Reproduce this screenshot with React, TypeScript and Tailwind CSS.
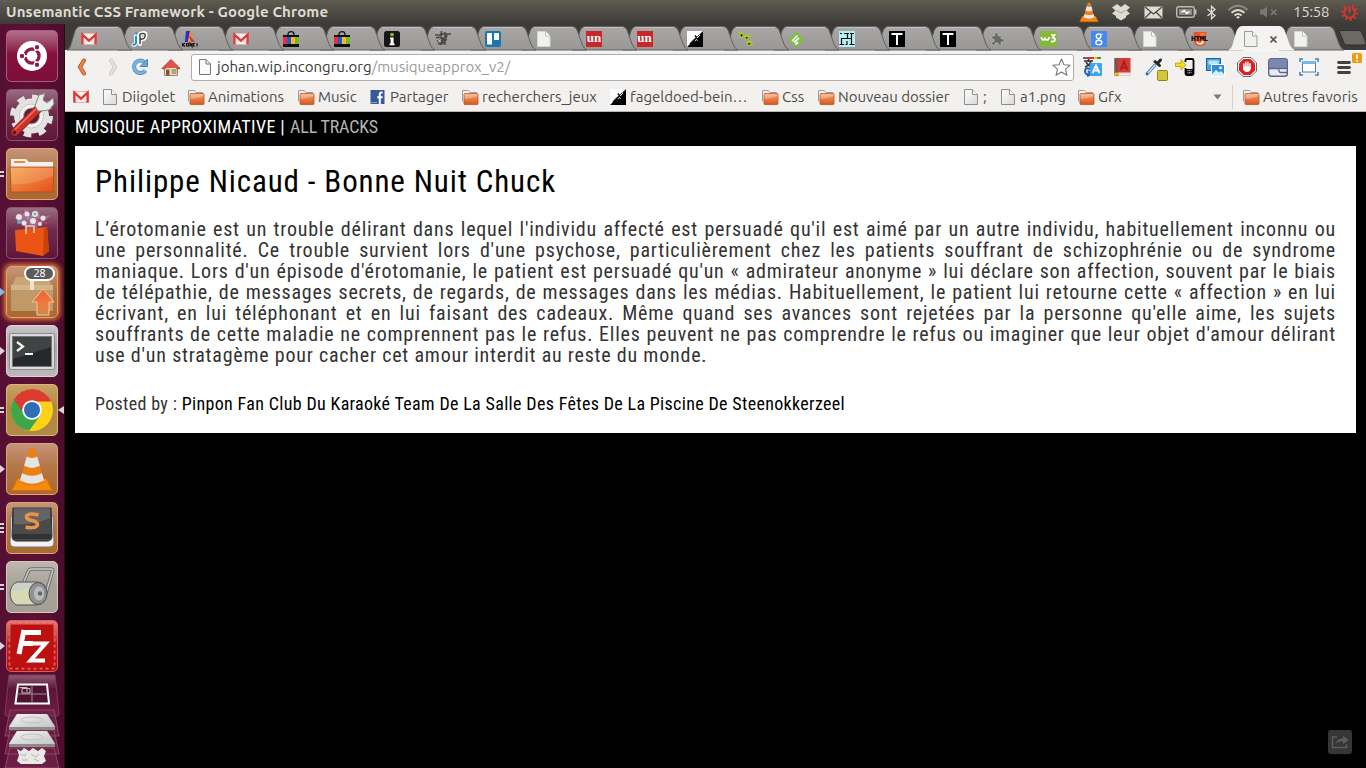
import React from "react";

const PAGE = "font-['Roboto_Condensed','Open_Sans',sans-serif]";

/* ---------- small icons (16px grid) ---------- */

const Svg = ({ w = 16, h = 16, box, children, className = "" }: { w?: number; h?: number; box?: string; children: React.ReactNode; className?: string }) => (
  <svg width={w} height={h} viewBox={box ?? `0 0 ${w} ${h}`} className={`block shrink-0 overflow-visible ${className}`}>{children}</svg>
);

const Gmail = () => (
  <Svg>
    <rect x="0.5" y="2.5" width="15" height="11" rx="1" fill="#fbf3f2" stroke="#e3b5b0" />
    <path d="M3 13 L6.3 8.6 M13 13 L9.7 8.6" stroke="#dcc" fill="none" />
    <path d="M1.4 13.5 V3.6 L8 9.6 L14.6 3.6 V13.5" fill="none" stroke="#dd3a38" strokeWidth="2.4" />
  </Svg>
);
const PageIcon = () => (
  <Svg>
    <path d="M1.5 0.5 H9.5 L14.5 5.5 V15.5 H1.5 Z" fill="url(#gPage)" stroke="#8e8e8e" />
    <path d="M9.5 0.5 V5.5 H14.5" fill="#fff" stroke="#8e8e8e" />
  </Svg>
);
const TabPage = ({ outlined }: { outlined?: boolean }) => (
  <Svg>
    <path d="M1.500 0.5 H9.500 L14 5 V15.5 H1.500 Z" fill="#f1f1ef" stroke={outlined ? "#9b9b99" : "#d4d4d2"} />
    <path d="M9.500 0.5 V5 H14" fill="#fff" stroke={outlined ? "#9b9b99" : "#bdbdbb"} />
  </Svg>
);
const Folder = () => (
  <Svg>
    <path d="M0.5 12.5 V1.5 H6.5 L8 3.5 H14.5 V5" fill="#f6f3f1" stroke="#a39c98" />
    <rect x="2" y="4.5" width="14" height="11" rx="0.8" fill="url(#gFolder)" stroke="#c0562a" strokeWidth="0.8" />
    <path d="M2.5 10 Q9 9.5 15.5 7 V5 H2.5 Z" fill="#fff" opacity="0.28" />
  </Svg>
);
const Jp = () => (
  <Svg>
    <g fill="none" strokeLinecap="round">
      <path d="M4 5 V11 Q4 14 1.5 13.8 M8 13 V3 Q14 0.5 13.5 5 Q13 9 8.5 8" stroke="#fff" strokeWidth="4" />
      <path d="M4 5.5 V11 Q4 14 1.3 13.6 M4.2 2.2 V2.4" stroke="#1a8fd0" strokeWidth="2" />
      <path d="M8 12.5 V3.2 Q13.6 1 13.2 5 Q12.6 8.6 8.5 7.8" stroke="#333" strokeWidth="1.4" />
    </g>
  </Svg>
);
const Kong = () => (
  <Svg>
    <path d="M4 0 H8 L6 11 H3 Z" fill="#2b2bd0" /><path d="M8 0 H12 L8 6 L6.6 7 Z" fill="#f58a1f" />
    <path d="M8 5 L13 11 H9 L7 7 Z" fill="#e33124" /><path d="M7 6 L9 11 H6 Z" fill="#ffb400" />
    <path d="M0.5 12 V15.5 M3 12 L1 13.8 L3 15.5 M4.5 12.5 H6.5 V15 H4.5 Z M8 15.5 V12 L10 15.5 V12 M13 12.5 H11.4 V15 H13 M15 12 V15.5" stroke="#111" strokeWidth="1.1" fill="none" />
  </Svg>
);
const Bag = () => (
  <Svg>
    <path d="M5 5 V3.5 Q5 0.7 8 0.7 Q11 0.7 11 3.5 V5" fill="none" stroke="#161616" strokeWidth="1.3" />
    <rect y="4" width="16" height="12" fill="#0b0b0b" />
    <rect y="6" width="4" height="7" fill="#ee2b36" /><rect x="4" y="6" width="4" height="7" fill="#1a5bd8" />
    <rect x="8" y="6" width="4" height="7" fill="#fcb811" /><rect x="12" y="6" width="4" height="7" fill="#73b72b" />
  </Svg>
);
const Info = () => (
  <Svg>
    <rect width="16" height="16" rx="2.5" fill="#161616" />
    <circle cx="8" cy="3.6" r="1.9" fill="#84c01c" />
    <path d="M6 6.5 H9.6 V12.5 H10.6 V14.3 H5.6 V12.5 H6.6 V8 H6 Z" fill="#fff" />
  </Svg>
);
const Scribble = () => (
  <Svg>
    <path d="M6.5 0 V5 M0 4 H6 M5 3 H16 M10 1 V14 M1 7 Q5 5 7 8 T11 8 M2 10 Q5 8 8 11 L4 13 M5 6 L12 9 M3 12 Q7 15 9 11 M12 4 L11 7" fill="none" stroke="#4b4947" strokeWidth="1.6" />
    <path d="M3 9 L6 10" stroke="#cfcdc9" />
  </Svg>
);
const Trello = () => (
  <Svg>
    <rect width="16" height="16" rx="2" fill="#1d76aa" />
    <rect x="2" y="2" width="5" height="11.5" rx="0.6" fill="#fff" /><rect x="9" y="2" width="5" height="7" rx="0.6" fill="#fff" />
  </Svg>
);
const Un = () => (
  <div className="flex size-4 items-center justify-center bg-[#c9262a] font-['Liberation_Serif',serif] text-[13px] leading-none font-bold text-white pb-[3px]">un</div>
);
const Split = () => (
  <Svg>
    <rect width="16" height="16" fill="#fff" /><path d="M16 0 V16 H0 Z" fill="#000" />
    <path d="M3 13 L8 8 M8 4.5 L9.5 6.5 L8.4 8 L10 9 L12 4" stroke="#111" strokeWidth="1.5" fill="none" />
    <path d="M7.8 10 L9.6 8.4 L10.5 9.8 M10 7 L13 4" stroke="#eee" strokeWidth="1" fill="none" />
  </Svg>
);
const Blobs = () => (
  <Svg>
    <path d="M1 1 Q4 0 6 3 Q5 8 2 7 Q0 4 1 1 Z M6 5 Q9 2 12 4 Q13 8 8 9 Q6 8 6 5 Z M8 11 Q12 8 15 11 Q15 15 11 15 Q8 14 8 11 Z" fill="#a9c92c" />
    <path d="M2.5 3 L5 4 L3 6 Z M7.5 6 L10.5 6.5 L8.5 8 Z M9.5 12 L13 12.5 L11 14 Z" fill="#111" />
  </Svg>
);
const Feedly = () => (
  <Svg>
    <rect x="2.6" y="2.9" width="11.2" height="11.2" rx="2" transform="rotate(45 8.2 8.5)" fill="#7cc13c" />
    <path d="M4.5 9.5 L9 5 M6.5 11 L10.5 7.5 M8 13 L9.7 11.6" stroke="#fff" strokeWidth="1.7" strokeLinecap="round" />
  </Svg>
);
const Maze = () => (
  <Svg>
    <rect width="16" height="16" fill="#b7eef3" />
    <path d="M1 2.500 H3 M5 2.5 H10 M8.500 2.500 V7.5 H2.5 V13 M0.5 13.5 H5 M6.500 13.500 H8 V10 M12.500 2.500 V13.500 M10.500 13.5 H15.500 M11 2.500 H15 M8 7.500 H12.500" fill="none" stroke="#111" strokeWidth="1.200" />
  </Svg>
);
const Tee = () => (
  <Svg><rect width="16" height="16" fill="#000" /><path d="M2.5 3 H13.5 M8 3 V14" stroke="#fff" strokeWidth="2" /></Svg>
);
const Puzzle = () => (
  <Svg>
    <path d="M2 5 H5 Q3.8 2 6.5 2 Q9 2 8 5 H11 V8 Q14 7 14 9.5 Q14 12 11 10.8 V14 H8.4 Q9 11.6 6.6 11.6 Q4.4 11.6 5 14 H2 V11 Q4.6 11.4 4.6 9.4 Q4.6 7.6 2 8 Z" fill="#686866" stroke="#c4c4c2" strokeWidth="0.4" />
  </Svg>
);
const W3 = () => (
  <Svg>
    <rect x="-1" width="17" height="16" fill="#86b93b" />
    <path d="M0.5 6 Q0.7 9 2.4 9 Q4 9 4 6.5 Q4.2 9 6 9 Q8 9 8 6 M10 4 H13.6 L11.8 6.6 Q14.6 7 13.8 9.6 Q12.6 11.4 10 10.2" fill="none" stroke="#fff" strokeWidth="1.7" />
  </Svg>
);
const GoogleG = () => (
  <Svg>
    <rect width="16" height="16" rx="1" fill="#4587f3" />
    <circle cx="7.6" cy="5.2" r="2.3" fill="none" stroke="#fff" strokeWidth="1.4" />
    <ellipse cx="7.8" cy="11.4" rx="3" ry="2.2" fill="none" stroke="#fff" strokeWidth="1.4" />
    <path d="M8.4 7.4 Q6.4 8.2 8.6 9.4 M9 3.2 H11.6" stroke="#fff" strokeWidth="1.1" fill="none" />
  </Svg>
);
const Html5 = () => (
  <div className="relative size-4">
    <Svg>
      <path d="M1.5 1 H14.5 L13.3 13.5 L8 15.5 L2.7 13.5 Z" fill="#e4552b" /><path d="M8 2 H13.3 L12.2 12.6 L8 14.2 Z" fill="#f2733c" />
      <path d="M11 10 L10.6 12 L8 13 L5.4 12 L5.2 10.6" stroke="#fff" strokeWidth="1.5" fill="none" />
    </Svg>
    <span className="absolute top-[3px] -left-px font-['Liberation_Mono',monospace] text-[8px] leading-[9px] font-bold tracking-[-0.6px] text-black">HTML</span>
  </div>
);
const Facebook = () => (
  <Svg><rect x="0.5" y="1" width="14" height="14" fill="#3b5998" /><path d="M12.6 3.6 H11.4 Q9.8 3.6 9.8 5.4 V15 M7.2 8.2 H12.6" stroke="#fff" strokeWidth="2" fill="none" /><path d="M1 13.6 H7" stroke="#8fa3cc" /></Svg>
);

/* ---------- top panel ---------- */

const Cone = ({ s = 20 }: { s?: number }) => (
  <Svg w={s} h={s} box="0 0 40 42">
    <path d="M6 30 H34 L39.5 41.5 H0.5 Z" fill="#f58a12" stroke="#d66a07" />
    <path d="M17 3 Q20 -1 23 3 L32 34 Q20 41 8 34 Z" fill="#f07f13" />
    <path d="M15 9 Q20 12 25 9 L27.500 18 Q20 22 12.500 18 Z M10.500 25 Q20 30 29.500 25 L31.500 32 Q20 38 8.500 32 Z" fill="#e4e6e6" />
  </Svg>
);

const TopPanel = () => (
  <header className="flex h-6 shrink-0 items-center bg-linear-to-b from-[#5f5c50] to-[#3c3b37] pl-[6px] pr-[8px] text-[#dfdbd2]">
    <h1 className="flex-1 font-[Ubuntu,'Noto_Sans',sans-serif] text-[15px] leading-6 font-bold tracking-[0.130px] whitespace-nowrap">Unsemantic CSS Framework - Google Chrome</h1>
    <div className="flex items-center">
      <Cone />
      <Svg w={18} h={18} className="ml-[13px]"><path d="M5 1 L9 4 L13 1 L18 4.500 L14.500 7.500 L18 10.500 L14 13 V14.500 L9 17.500 L4 14.500 V13 L0 10.500 L3.500 7.500 L0 4.500 Z" fill="#dfdbd2" /><path d="M4.500 7.500 L9 10 L13.500 7.500" stroke="#8a877e" fill="none" strokeWidth="0.7" /></Svg>
      <Svg w={19} h={13} className="ml-[14px]"><rect x="0.500" y="0.500" width="18" height="12" fill="#dfdbd2" /><path d="M1 1 L9.500 8 L18 1 M1 12 L7 6 M18 12 L12 6" stroke="#4a4943" strokeWidth="1.300" fill="none" /></Svg>
      <Svg w={21} h={12} className="ml-[13px]"><rect x="0.700" y="0.700" width="17.500" height="10.600" rx="2" fill="none" stroke="#bfbbb2" strokeWidth="1.400" /><rect x="3" y="3" width="13" height="6" fill="#8e8b83" /><path d="M19.500 3.500 V8.500" stroke="#bfbbb2" strokeWidth="2" /><path d="M4 6.300 L8.500 3.500 L10 5.700 L15 5.500 L10.500 8.500 L9 6.300 Z" fill="#fff" /></Svg>
      <Svg w={9} h={15} className="ml-[10px]"><path d="M0.500 4 L8 10.500 L4.500 13.800 V1.200 L8 4.500 L0.500 11" fill="none" stroke="#dfdbd2" strokeWidth="1.300" /></Svg>
      <Svg w={20} h={14} className="ml-[12px]"><path d="M0.500 5 Q10 -3.500 19.500 5" fill="none" stroke="#8f8c84" strokeWidth="1.800" /><path d="M3.500 7.800 Q10 2 16.500 7.800" fill="none" stroke="#dfdbd2" strokeWidth="1.900" /><path d="M6.500 10.500 Q10 7.300 13.500 10.500" fill="none" stroke="#dfdbd2" strokeWidth="1.900" /><path d="M8 12 L10 14 L12 12 Q10 10.500 8 12 Z" fill="#dfdbd2" /></Svg>
      <Svg w={18} h={12} className="ml-[12px]"><path d="M0 3.500 H3 L7 0.500 V11.500 L3 8.500 H0 Z" fill="#7b7871" /><path d="M11 3.500 L16.500 9 M16.500 3.500 L11 9" stroke="#7b7871" strokeWidth="1.600" /></Svg>
      <span className="ml-[15px] w-[37px] font-[Ubuntu,'Noto_Sans',sans-serif] text-[15px] leading-6 tracking-[-0.250px] whitespace-nowrap">15:58</span>
      <Svg w={17} h={17} className="ml-[11px]"><circle cx="8.500" cy="8.500" r="5.300" fill="none" stroke="#e3332d" strokeWidth="1.800" /><circle cx="8.500" cy="8.500" r="7.300" fill="none" stroke="#e3332d" strokeWidth="2" strokeDasharray="2 2.587" /><path d="M8.500 0.500 V8" stroke="#4b4a44" strokeWidth="4" /><path d="M8.500 1.500 V8.500" stroke="#e3332d" strokeWidth="2" /></Svg>
    </div>
  </header>
);

/* ---------- launcher ---------- */

const tileTones = {
  wine: "from-[#b0708c] via-[#86113f] to-[#7c0f3a] border-[#b0567c]",
  plum: "from-[#9a6d82] via-[#6f2a4a] to-[#5f1739] border-[#8b5570]",
  tan: "from-[#c69478] via-[#b47746] to-[#a9692f] border-[#d9a679]",
  gold: "from-[#c9a168] via-[#b0873f] to-[#b08a49] border-[#d8b678]",
  silver: "from-[#c9c5c9] via-[#aba6aa] to-[#bdb9bb] border-[#d9d5d8]",
  stone: "from-[#bdb7ae] via-[#aaa399] to-[#a59e94] border-[#d0cbc2]",
  red: "from-[#dd7f7f] via-[#c01a1a] to-[#b50c0c] border-[#dc5b5b]",
};

const Tile = ({ tone, left, right, glow, children }: { tone: keyof typeof tileTones; left?: React.ReactNode; right?: boolean; glow?: boolean; children: React.ReactNode }) => (
  <div className="relative h-[52px] shrink-0 px-[6px]">
    <div className={`flex size-[52px] items-center justify-center rounded-[5px] border bg-linear-to-b via-45% ${tileTones[tone]} ${glow ? "shadow-[0_0_5px_2px_#e87b33]" : ""}`}>{children}</div>
    {left && <div className="absolute top-[19px] left-0">{left}</div>}
    {right && <Svg w={6} h={8} className="absolute top-[22px] right-0"><path d="M6 0 V8 L0 4 Z" fill="#d9d4d8" /></Svg>}
  </div>
);
const Arrow = ({ blue }: { blue?: boolean }) => <Svg w={5} h={14}><path d="M0 3 V11 L5 7 Z" fill={blue ? "#7cc0e6" : "#d9d4d8"} /></Svg>;
const Bars = ({ n }: { n: number }) => (
  <Svg w={5} h={14}>{n === 2 ? <path d="M0 5 H4 M0 9 H4" stroke="#d9d4d8" strokeWidth="2" /> : <path d="M0 3 H4 M0 7 H4 M0 11 H4" stroke="#d9d4d8" strokeWidth="2" />}</Svg>
);

const Launcher = () => (
  <nav className="flex w-[65px] shrink-0 flex-col gap-[7px] overflow-hidden border-r border-[#2a0a1a] bg-linear-to-r from-[#550f33] via-[#5f1035] to-[#4c0d2c] pt-[6px]">
    <Tile tone="wine">
      <Svg w={30} h={30}>
        <circle cx="15" cy="15" r="15" fill="#fff" />
        <circle cx="15" cy="15" r="7" fill="none" stroke="#8c1d4a" strokeWidth="3.400" />
        <g stroke="#fff" strokeWidth="1.300"><path d="M15 15 L1 15 M15 15 L22 3 M15 15 L22 27" /></g>
        <circle cx="15" cy="15" r="5.300" fill="#fff" />
        <g fill="#8c1d4a" stroke="#fff" strokeWidth="1.200"><circle cx="5" cy="15" r="2.800" /><circle cx="20" cy="6.300" r="2.800" /><circle cx="20" cy="23.700" r="2.800" /></g>
      </Svg>
    </Tile>
    <Tile tone="plum">
      <Svg w={46} h={46}>
        <circle cx="22.500" cy="24" r="17.500" fill="#e2e2e0" />
        <circle cx="22.500" cy="24" r="19" fill="none" stroke="#e2e2e0" strokeWidth="5" strokeDasharray="7.500 7.420" />
        <circle cx="22.500" cy="24" r="12" fill="#f4f4f3" stroke="#c7c7c7" /><circle cx="22.500" cy="24" r="8" fill="#5f1a3a" stroke="#aaa" />
        <path d="M6 40 L31 15" stroke="#7c1512" strokeWidth="8.500" strokeLinecap="round" /><path d="M6 40 L30 16" stroke="#cf3229" strokeWidth="7" strokeLinecap="round" /><path d="M6 37.500 L27 17" stroke="#ef7469" strokeWidth="1.500" />
        <circle cx="5.500" cy="40.500" r="1.700" fill="#53100e" />
        <path d="M29 19 L26 14 L30 3 L36 1.500 L34 8 L38 11 L44 6 L45 12 L40 18 L32 19 Z" fill="#e9ebea" stroke="#8a8a88" />
      </Svg>
    </Tile>
    <Tile tone="tan" left={<Bars n={2} />}>
      <Svg w={46} h={40}>
        <path d="M2 14 V5 H17 L20 8 H44 V14 Z" fill="#f3f1ee" /><path d="M5 8 H16" stroke="#ef8a3b" strokeWidth="2" />
        <path d="M1 13 H45 L44 38 H2 Z" fill="url(#gNautilus)" stroke="#b9481c" strokeWidth="0.800" />
        <path d="M2 14 H44 V22 Q22 32 3 30 Z" fill="#fff" opacity="0.150" />
      </Svg>
    </Tile>
    <Tile tone="plum">
      <Svg w={42} h={48}>
        <path d="M20 24 L3 8 L11 7 L14 0 L20 6 L26 1 L30 8 L40 6 Z" fill="#dcb4c5" opacity="0.350" />
        <g fill="#e7e3e8"><circle cx="8" cy="8" r="3" /><circle cx="16" cy="5" r="2.500" /><circle cx="24" cy="5" r="3" /><circle cx="32" cy="9" r="2.500" /><circle cx="13" cy="14" r="2.500" /><circle cx="22" cy="12" r="3" /><circle cx="29" cy="15" r="2" /></g>
        <g fill="#6ea3c8"><circle cx="8" cy="13" r="2" /><circle cx="24" cy="5" r="1.300" /><circle cx="17" cy="9" r="1.300" /></g><g fill="#c9385f"><circle cx="28" cy="11" r="1.500" /><circle cx="12" cy="3" r="1.200" /><circle cx="35" cy="14" r="1.300" /></g>
        <path d="M4 21 L36 18 L38 42 L32 47 L5 42 Z" fill="#ea5414" /><path d="M36 18 L38 42 L32 47 L33 20 Z" fill="#c9420b" />
        <path d="M15 25 V17 H23 V24" fill="none" stroke="#f6c9b4" strokeWidth="1.600" />
      </Svg>
    </Tile>
    <Tile tone="tan" glow left={<Arrow blue />}>
      <div className="relative">
        <Svg w={46} h={42}>
          <path d="M3 15 L7 6 H38 L43 15 Z" fill="#c8a678" /><rect x="2" y="14" width="42" height="26" rx="1" fill="#bf9a68" /><rect x="2" y="14" width="42" height="5" fill="#d3b58b" /><rect x="21" y="10" width="4" height="9" fill="#efe3d0" />
          <path d="M34 18 L45 31 H40 V44 H28 V31 H23 Z" fill="url(#gUp)" stroke="#fbc59a" />
        </Svg>
        <span className="absolute -top-[5px] left-[15px] flex h-[15px] w-[31px] items-center justify-center rounded-full border-2 border-white bg-[#5c5a5c] font-['Noto_Sans',sans-serif] text-[10.5px] leading-none text-white">28</span>
      </div>
    </Tile>
    <Tile tone="silver" left={<Arrow />}>
      <Svg w={46} h={40}>
        <rect x="0.500" y="2.500" width="45" height="36" rx="1.500" fill="#d9d9d9" stroke="#8d8d8d" /><rect x="3.500" y="5.500" width="39" height="30" fill="#27282a" stroke="#777" />
        <path d="M4 6 H42 V16 L4 28 Z" fill="#fff" opacity="0.120" />
        <path d="M8 11 L14 15.500 L8 20 M16 23 H24" stroke="#f4f4f4" strokeWidth="2.200" fill="none" />
      </Svg>
    </Tile>
    <Tile tone="gold" left={<Bars n={2} />} right>
      <Svg w={44} h={44}>
        <circle cx="22" cy="22" r="21" fill="#fcd116" />
        <path d="M22 22 L3.800 11.500 A21 21 0 0 0 19 42.800 L31 26 Z" fill="#3da64a" />
        <path d="M22 22 L3.800 11.500 A21 21 0 0 1 41.200 13.500 L22 13.500 Z" fill="#dd3a31" />
        <path d="M3.800 11.500 L14 26 L19 15 Z" fill="#dd3a31" /><path d="M31 26 L19 42.800 L22 30 Z" fill="#3da64a" />
        <circle cx="22" cy="22" r="9.800" fill="#fff" /><circle cx="22" cy="22" r="8" fill="#2f6db5" />
      </Svg>
    </Tile>
    <Tile tone="tan" left={<Arrow />}><Cone s={44} /></Tile>
    <Tile tone="tan" left={<Bars n={3} />}>
      <Svg w={46} h={44}>
        <path d="M2 10 L1 36 Q1 41 6 41 H40 Q45 41 45 36 L44 10 Z" fill="#f2f2f2" stroke="#777" />
        <path d="M4 2 H42 L43 30 Q43 35 38 35 H8 Q3 35 3 30 Z" fill="#4a4a4a" stroke="#2b2b2b" /><path d="M5 1.500 H41 V12 Q23 20 5 18 Z" fill="#fff" opacity="0.150" /><path d="M4 28 H42 L42 33 H4 Z" fill="#333" />
        <path d="M29.500 9 Q20 6.500 17.500 10 Q17 13.500 23 14.500 Q30 16 28 20 Q25 23 16.500 21" fill="none" stroke="#e8924a" strokeWidth="3.600" />
      </Svg>
    </Tile>
    <Tile tone="stone" left={<Bars n={2} />}>
      <Svg w={46} h={44}>
        <path d="M12 24 L19 7 Q20 4 23 4 L42 4 Q45 4 43 8 L37 28" fill="none" stroke="#6f6f70" strokeWidth="3.500" /><path d="M12 24 L19 7 Q20 4 23 4 L42 4 Q45 4 43 8 L37 28" fill="none" stroke="#c9cbcb" strokeWidth="1.500" />
        <path d="M8 17 H28 Q38 18 38 28 Q37 39 28 40 H7 Q1 36 1 28 Q2 19 8 17 Z" fill="#ccd0c8" stroke="#555" />
        <path d="M2 25 L12 26 L18 23 L27 25 L26 39 H8 Q2 35 2 25 Z" fill="#d7d9b4" />
        <ellipse cx="29" cy="28.500" rx="9" ry="11" fill="#8f9292" stroke="#555" /><ellipse cx="30" cy="28.500" rx="5" ry="7" fill="#bbb" /><circle cx="31" cy="28.500" r="2.200" fill="#666" />
      </Svg>
    </Tile>
    <Tile tone="red" left={<Arrow />}>
      <Svg w={50} h={50}>
        <rect x="2.500" y="2.500" width="45" height="45" fill="none" stroke="#e06464" strokeWidth="2" strokeDasharray="3 3" /><rect x="3.500" y="3.500" width="43" height="43" fill="#bd1010" />
        <path d="M16 11.500 H34 M13 22.500 H26 M17 9 L12 33" stroke="#fff" strokeWidth="5" fill="none" />
        <path d="M23 22.500 H38.500 L23.500 39.500 H38" stroke="#fff" strokeWidth="4" fill="none" />
      </Svg>
    </Tile>
    <Svg w={52} h={94} className="-mt-[5px] ml-[6px]">
      <path d="M3 1 H49 L53 40 Q53 42 50 42 H1 Q-1 42 -1 40 Z" fill="url(#gFold)" stroke="#7b3a58" />
      <path d="M12 10.500 H41 L43 29.500 H9.500 Z" fill="#4e1330" stroke="#fff" strokeWidth="2" /><path d="M26 11 V29 M11 20 H42" stroke="#a8899a" /><path d="M13.500 13.500 H21 V18 M16 14.500 H24 V19 H16 Z" fill="none" stroke="#cbbac3" />
      <path d="M4 36 H48 L53 62 H-1 Z M4 56 H48 L53 80 H-1 Z M4 74 H48 L53 94 H-1 Z" fill="#74264b" fillOpacity="0.700" stroke="#8b4767" />
      <path d="M11 40 H41 L49 52 V56 H3 V52 Z" fill="#8b8b8b" /><path d="M11 40 H41 L49 53 H3 Z" fill="url(#gDrive)" /><ellipse cx="26" cy="46" rx="11" ry="3" fill="none" stroke="#c2c2c2" />
      <path d="M11 57 H41 L49 69 V73 H3 V69 Z" fill="#8b8b8b" /><path d="M11 57 H41 L49 70 H3 Z" fill="url(#gDrive)" /><ellipse cx="26" cy="63" rx="11" ry="3" fill="none" stroke="#c2c2c2" />
      <path d="M11 75 L15 77 L18 74 L23 77 L27 74 L32 77 L36 74 L40 77 L38 82 L40 87 L36 90 H15 L11 87 L13 81 Z" fill="#e8e8e7" /><path d="M14 80 L19 82 L20 79 M25 80 L30 83 L33 80 M16 86 L22 86 M28 85 L33 87" stroke="#b7b7b6" fill="none" />
    </Svg>
  </nav>
);

/* ---------- browser chrome ---------- */

const tabs: { icon: React.ReactNode; active?: boolean }[] = [
  { icon: <Gmail /> }, { icon: <Jp /> }, { icon: <Kong /> }, { icon: <Gmail /> }, { icon: <Bag /> }, { icon: <Bag /> },
  { icon: <Info /> }, { icon: <Scribble /> }, { icon: <Trello /> }, { icon: <TabPage /> }, { icon: <Un /> }, { icon: <Un /> },
  { icon: <Split /> }, { icon: <Blobs /> }, { icon: <Feedly /> }, { icon: <Maze /> }, { icon: <Tee /> }, { icon: <Tee /> },
  { icon: <Puzzle /> }, { icon: <W3 /> }, { icon: <GoogleG /> }, { icon: <TabPage /> }, { icon: <Html5 /> },
  { icon: <TabPage outlined />, active: true }, { icon: <TabPage /> },
];

const TabStrip = () => (
  <div className="flex h-[26px] items-end bg-[#3c3b37] pl-[2px]">
    <div className="flex flex-row-reverse">
      {[...tabs].reverse().map((t, i) => (
        <div key={i} className={`relative h-6 w-[50.5px] ${t.active ? "z-10" : ""}`}>
          <Svg w={66} h={24} className="absolute top-0 left-0">
            <path
              d="M0 24 C3 23 3.500 20 5 15 L8 5 Q9.500 0.500 13 0.500 H50 Q53.500 0.500 55 4 L60 18 Q62 23 65 24 Z"
              fill={t.active ? "#f4f3f2" : "url(#gTab)"} stroke={t.active ? "#f4f3f2" : "#62615e"} strokeWidth="1"
            />
            {!t.active && <path d="M12 1.500 H51" stroke="#c0bfbd" />}
          </Svg>
          <div className="relative flex h-full items-center pt-[2px] pl-[14px]">
            {t.icon}
            {t.active && <Svg w={7} h={7} className="ml-[11px]"><path d="M0.500 0.500 L6.500 6.500 M6.500 0.500 L0.500 6.500" stroke="#55534f" strokeWidth="1.700" /></Svg>}
          </div>
        </div>
      ))}
    </div>
    <Svg w={27} h={16} className="mb-[4px] ml-[9px]"><path d="M1 0.500 H20 Q22 0.500 23 3 L27 13 Q27.500 15 25 15 H8 Q6 15 5 13 L0.500 2 Z" fill="#6a6964" stroke="#302f2c" /></Svg>
  </div>
);

const Toolbar = () => (
  <div className="flex h-[33px] items-center border-t border-[#fbfbfa] bg-[#f2f1f0]">
    <Svg w={10} h={18} className="ml-[12px]"><path d="M7 2.500 L3 9 L7 15.500" fill="none" stroke="#b24a1b" strokeWidth="4" strokeLinecap="round" /><path d="M7 2.500 L3 9 L7 15.500" fill="none" stroke="#ee8545" strokeWidth="2.400" strokeLinecap="round" /></Svg>
    <Svg w={10} h={18} className="ml-[21px]"><path d="M3 2.500 L7 9 L3 15.500" fill="none" stroke="#c9c7c5" strokeWidth="4" strokeLinecap="round" /><path d="M3 2.500 L7 9 L3 15.500" fill="none" stroke="#e2e0de" strokeWidth="2.400" strokeLinecap="round" /></Svg>
    <Svg w={17} h={18} className="ml-[14px]"><path d="M13 4.500 A6.300 6.300 0 1 0 13.500 12.500" fill="none" stroke="#4a87c6" strokeWidth="4" /><path d="M13 4.500 A6.300 6.300 0 1 0 13.500 12.500" fill="none" stroke="#7db3e2" strokeWidth="2.600" /><path d="M15.500 1 V8.500 H8 Z" fill="#6ba6dc" stroke="#4a87c6" /></Svg>
    <Svg w={20} h={19} className="ml-[12px]"><path d="M3.500 10 V17.500 H16.500 V10 L10 4 Z" fill="#efe2c8" stroke="#9a8667" /><path d="M1 10.500 L10 1.500 L19 10.500 L16.500 11 L10 6 L3.500 11 Z" fill="#dd4a42" stroke="#b5403a" /><path d="M10 2 L17.500 10 H2.500 Z" fill="#dd544c" /><rect x="5" y="11.500" width="3.500" height="6" fill="#81592e" /><rect x="11" y="11.500" width="4" height="4" fill="#7eb0dc" stroke="#c99b3c" /></Svg>
    <div className="ml-[10px] flex h-[27px] w-[883px] items-center rounded-[3px] border border-[#b0aca7] bg-white pl-[5px]">
      <Svg w={15} h={16}><path d="M2.500 0.500 H9 L13.500 5 V15.500 H2.500 Z" fill="#fafafa" stroke="#777" /><path d="M9 0.500 V5 H13.500" fill="none" stroke="#777" /></Svg>
      <span className="ml-[5px] flex-1 font-[Ubuntu,'Noto_Sans',sans-serif] text-[15px] leading-[24px] whitespace-nowrap text-[#3a3936]">johan.wip.incongru.org<span className="text-[#9c9a97]">/musiqueapprox_v2/</span></span>
      <Svg w={19} h={18} className="mr-[2px]"><path d="M9.500 1 L12 6.800 L18.200 7.200 L13.500 11.200 L15 17.300 L9.500 14 L4 17.300 L5.500 11.200 L0.800 7.200 L7 6.800 Z" fill="#fff" stroke="#777572" strokeWidth="1.100" strokeLinejoin="round" /></Svg>
    </div>
    <Svg w={20} h={20} className="ml-[8px]"><path d="M1 1 H4" stroke="#3367d6" strokeWidth="2" /><path d="M4 1 H12" stroke="#d33" strokeWidth="2" /><path d="M12 1 H15" stroke="#fb0" strokeWidth="2" /><path d="M15 1 H19" stroke="#393" strokeWidth="2" /><path d="M2 4 H11 M6.500 2 V5 M3 10 Q8 8 9 4 M4 5 Q6 9 10 10" stroke="#333" strokeWidth="1.500" fill="none" /><path d="M8 12 Q3 10 3 14 Q3 18 7 17 M5 19 L9 17 L6 14" stroke="#1a62b8" strokeWidth="2" fill="none" /><rect x="8" y="6" width="12" height="13" rx="1" fill="#3fa4e8" /><path d="M10.500 16 L14 8.500 L17.500 16 M12 13.500 H16" stroke="#fff" strokeWidth="1.800" fill="none" /></Svg>
    <Svg w={17} h={20} className="ml-[12px]"><path d="M0.500 1 H16.500 V15.500 H4 V19 H0.500 Z" fill="#d23c33" /><rect x="0.500" y="1" width="3" height="15" fill="#6d5a58" /><path d="M2 16 H16 V18.500 H4 Z" fill="#f5efe6" stroke="#b8a" strokeWidth="0.400" /><path d="M1 15.500 V20 L3 18 L5 20 V16 Z" fill="#f0b429" /><path d="M6.500 13 L10 4.500 L13.500 13 M8 10.500 H12" stroke="#a81f1a" strokeWidth="1.900" fill="none" /></Svg>
    <Svg w={23} h={24} className="mt-[5px] ml-[14px]"><path d="M2 16 L10 7" stroke="#3c70aa" strokeWidth="3" strokeLinecap="round" /><path d="M3 15 L10.500 6.500" stroke="#cfe3f4" strokeWidth="1.400" /><path d="M10 3.500 L14.500 7.500 M12.500 5.500 L15.500 2" stroke="#23272e" strokeWidth="3" strokeLinecap="round" /><rect x="12.500" y="12.500" width="10" height="10" rx="1" fill="#d3c63b" stroke="#8d8420" /></Svg>
    <Svg w={20} h={20} className="ml-[7px]"><path d="M0.500 6 H6 V2.500 L11 8 L6 13 V9.500 H0.500 Z" fill="#f6de1c" stroke="#a89208" strokeWidth="0.700" /><path d="M10.500 5 V3 Q10.500 2 12 2 H17 Q18.500 2 18.500 3.500 V16.500 Q18.500 18 17 18 H12 Q10.500 18 10.500 16.500 V11" fill="none" stroke="#000" strokeWidth="1.800" /><path d="M11 12 H18 V17.500 H11 Z" fill="#000" /><path d="M12.500 13.700 H16.500 M12.500 15.800 H16.500" stroke="#fff" strokeDasharray="1 0.600" /></Svg>
    <Svg w={19} h={19} className="ml-[11px]"><rect x="0.500" y="0.500" width="14" height="12" fill="#4ba4dd" stroke="#17659d" /><rect x="2.500" y="2.500" width="10" height="4" fill="#bfe4f8" /><rect x="5.500" y="6.500" width="13" height="12" fill="#2f8fd2" stroke="#fff" /><path d="M6 16 L10 12 L13 14.500 L15 13 L18 16 V18 H6 Z" fill="#d6f1fb" /><circle cx="14.500" cy="9.800" r="1.400" fill="#fff" /></Svg>
    <Svg w={20} h={20} className="ml-[12px]"><path d="M6 0.500 H14 L19.500 6 V14 L14 19.500 H6 L0.500 14 V6 Z" fill="#fff" stroke="#666" /><path d="M6.500 2 H13.500 L18 6.500 V13.500 L13.500 18 H6.500 L2 13.500 V6.500 Z" fill="#db1f22" /><path d="M6.800 10.500 V7 M8.800 10 V5.300 M10.900 10 V5.300 M13 11 V6.800" stroke="#fff" strokeWidth="1.500" strokeLinecap="round" /><path d="M6 9.500 H13.800 V12 Q13 15 10 15 Q7 15 6 12 Z" fill="#fff" /></Svg>
    <Svg w={20} h={19} className="ml-[11px]"><rect x="0.700" y="0.700" width="18.600" height="17.600" rx="2.500" fill="#e8ebf2" stroke="#59658a" strokeWidth="1.400" /><path d="M1 3 Q1 1 3 1 H17 Q19 1 19 3 V10 H1 Z" fill="#7a88ad" /><path d="M1 10.500 H9.500 Q11 10.500 11 12.500 Q11 14.500 13 14.500 H19" fill="none" stroke="#59658a" strokeWidth="1.300" /><path d="M11 10.500 H19" stroke="#59658a" strokeWidth="1.300" /></Svg>
    <Svg w={20} h={18} className="ml-[11px]"><path d="M1 4 V1 H4 M16 1 H19 V4 M19 14 V17 H16 M4 17 H1 V14" fill="none" stroke="#2f86c4" strokeWidth="1.500" /><rect x="3.500" y="4" width="13" height="10" fill="#fdfdfd" stroke="#5a7f9c" /><rect x="3.500" y="3.500" width="13" height="2.500" fill="#76b8e4" /></Svg>
    <div className="relative ml-[18px] h-[18px] w-[14px]">
      <Svg w={14} h={18}><path d="M1.500 4.500 H12.500 M1.500 9.500 H12.500 M1.500 14.500 H12.500" stroke="#43423f" strokeWidth="2.800" strokeLinecap="round" /></Svg>
      <Svg w={10} h={10} className="absolute -top-[5px] left-[15px]"><rect width="10" height="10" rx="1.500" fill="#f39a15" /><path d="M5 1.500 V6 M5 7.200 V8.700" stroke="#fff" strokeWidth="1.700" /></Svg>
    </div>
  </div>
);

const Mark = ({ icon, label, className }: { icon: React.ReactNode; label?: string; className: string }) => (
  <div className={`flex shrink-0 items-center gap-[4px] ${className}`}>{icon}{label && <span className="whitespace-nowrap">{label}</span>}</div>
);

const Bookmarks = () => (
  <div className="flex h-[29px] items-center border-b border-[#b9b5b0] bg-[#f2f1f0] pl-[8px] font-[Ubuntu,'Noto_Sans',sans-serif] text-[15px] leading-[20px] text-[#4c4b48]">
    <Mark className="w-[29px]" icon={<Gmail />} />
    <Mark className="w-[86px]" icon={<PageIcon />} label="Diigolet" />
    <Mark className="w-[110px]" icon={<Folder />} label="Animations" />
    <Mark className="w-[72px]" icon={<Folder />} label="Music" />
    <Mark className="w-[92px]" icon={<Facebook />} label="Partager" />
    <Mark className="w-[148px]" icon={<Folder />} label="recherchers_jeux" />
    <Mark className="w-[152px]" icon={<Split />} label="fageldoed-bein…" />
    <Mark className="w-[56px]" icon={<Folder />} label="Css" />
    <Mark className="w-[145px]" icon={<Folder />} label="Nouveau dossier" />
    <Mark className="w-[37px]" icon={<PageIcon />} label=";" />
    <Mark className="w-[78px]" icon={<PageIcon />} label="a1.png" />
    <Mark className="w-[135px]" icon={<Folder />} label="Gfx" />
    <Svg w={9} h={6}><path d="M0.500 0.500 H8.500 L4.500 5.500 Z" fill="#7d7b78" /></Svg>
    <div className="ml-[10px] h-6 w-px bg-[#d3d0cc]" />
    <Mark className="ml-[10px] w-[122px] tracking-[0.1px]" icon={<Folder />} label="Autres favoris" />
  </div>
);

/* ---------- page ---------- */

const lines = [
  "L’érotomanie est un trouble délirant dans lequel l'individu affecté est persuadé qu'il est aimé par un autre individu, habituellement inconnu ou",
  "une personnalité. Ce trouble survient lors d'une psychose, particulièrement chez les patients souffrant de schizophrénie ou de syndrome",
  "maniaque. Lors d'un épisode d'érotomanie, le patient est persuadé qu'un « admirateur anonyme » lui déclare son affection, souvent par le biais",
  "de télépathie, de messages secrets, de regards, de messages dans les médias. Habituellement, le patient lui retourne cette « affection » en lui",
  "écrivant, en lui téléphonant et en lui faisant des cadeaux. Même quand ses avances sont rejetées par la personne qu'elle aime, les sujets",
  "souffrants de cette maladie ne comprennent pas le refus. Elles peuvent ne pas comprendre le refus ou imaginer que leur objet d'amour délirant",
];

const PageContent = () => (
  <main className={`relative flex flex-1 flex-col bg-black px-[10px] ${PAGE}`}>
    <p className="flex h-[34px] gap-[5px] pt-[4px] text-[18px] leading-[22px] whitespace-nowrap text-white">
      <span className="tracking-[0.4px]">MUSIQUE APPROXIMATIVE |</span>
      <span className="tracking-[-0.2px] text-[#b3b3b3]">ALL TRACKS</span>
    </p>
    <article className="h-[287px] w-[1281px] bg-white pt-[18px] pr-[20px] pl-[20px] text-[#333]">
      <h2 className="h-[55px] text-[31px] leading-[36px] tracking-[0.88px] whitespace-nowrap text-black">Philippe Nicaud - Bonne Nuit Chuck</h2>
      <div className="text-[20px] leading-[21px] tracking-[0.78px] whitespace-nowrap">
        {lines.map((l) => <p key={l} className="w-[1241px] [text-align-last:justify]">{l}</p>)}
        <p>use d'un stratagème pour cacher cet amour interdit au reste du monde.</p>
      </div>
      <p className="mt-[27px] text-[18px] leading-[22px] tracking-[0.33px] whitespace-nowrap">Posted by : <span className="text-black">Pinpon Fan Club Du Karaoké Team De La Salle Des Fêtes De La Piscine De Steenokkerzeel</span></p>
    </article>
    <button className="absolute right-[14px] bottom-[14px] flex size-6 items-center justify-center rounded-[3px] bg-[#363636]">
      <Svg w={18} h={16}><path d="M6 3 H1.500 V13.500 H15.500 V10.500" fill="none" stroke="#5c5c5c" strokeWidth="1.500" /><path d="M4.500 10 Q6 4.500 12 4.500 V1.500 L17.500 6 L12 10.500 V7.500 Q7 7 4.500 10 Z" fill="#5c5c5c" /></Svg>
    </button>
  </main>
);

const Defs = () => (
  <svg width="0" height="0" className="absolute">
    <defs>
      <linearGradient id="gPage" x1="0" y1="0" x2="1" y2="1"><stop offset="0" stopColor="#fff" /><stop offset="1" stopColor="#d9d9d9" /></linearGradient>
      <linearGradient id="gFolder" x1="0" y1="0" x2="0" y2="1"><stop offset="0" stopColor="#f3a56d" /><stop offset="1" stopColor="#d9581e" /></linearGradient>
      <linearGradient id="gNautilus" x1="0" y1="0" x2="1" y2="1"><stop offset="0" stopColor="#f4a54c" /><stop offset="1" stopColor="#e54f1d" /></linearGradient>
      <linearGradient id="gTab" x1="0" y1="0" x2="0" y2="1"><stop offset="0" stopColor="#a9a8a6" /><stop offset="1" stopColor="#989795" /></linearGradient>
      <linearGradient id="gFold" x1="0" y1="0" x2="0" y2="1"><stop offset="0" stopColor="#8d5b73" /><stop offset="0.350" stopColor="#5a1537" /><stop offset="1" stopColor="#6b1f44" /></linearGradient>
      <linearGradient id="gUp" x1="0" y1="0" x2="0" y2="1"><stop offset="0" stopColor="#ee5f2c" /><stop offset="0.600" stopColor="#f07b40" /><stop offset="1" stopColor="#c98a4e" /></linearGradient>
      <linearGradient id="gDrive" x1="0" y1="0" x2="1" y2="1"><stop offset="0" stopColor="#f4f4f4" /><stop offset="1" stopColor="#c4c4c4" /></linearGradient>
    </defs>
  </svg>
);

export default function App() {
  return (
    <div className="flex h-[768px] w-[1366px] flex-col overflow-hidden bg-black">
      <Defs />
      <TopPanel />
      <div className="flex min-h-0 flex-1">
        <Launcher />
        <div className="flex min-w-0 flex-1 flex-col">
          <TabStrip />
          <Toolbar />
          <Bookmarks />
          <PageContent />
        </div>
      </div>
    </div>
  );
}
